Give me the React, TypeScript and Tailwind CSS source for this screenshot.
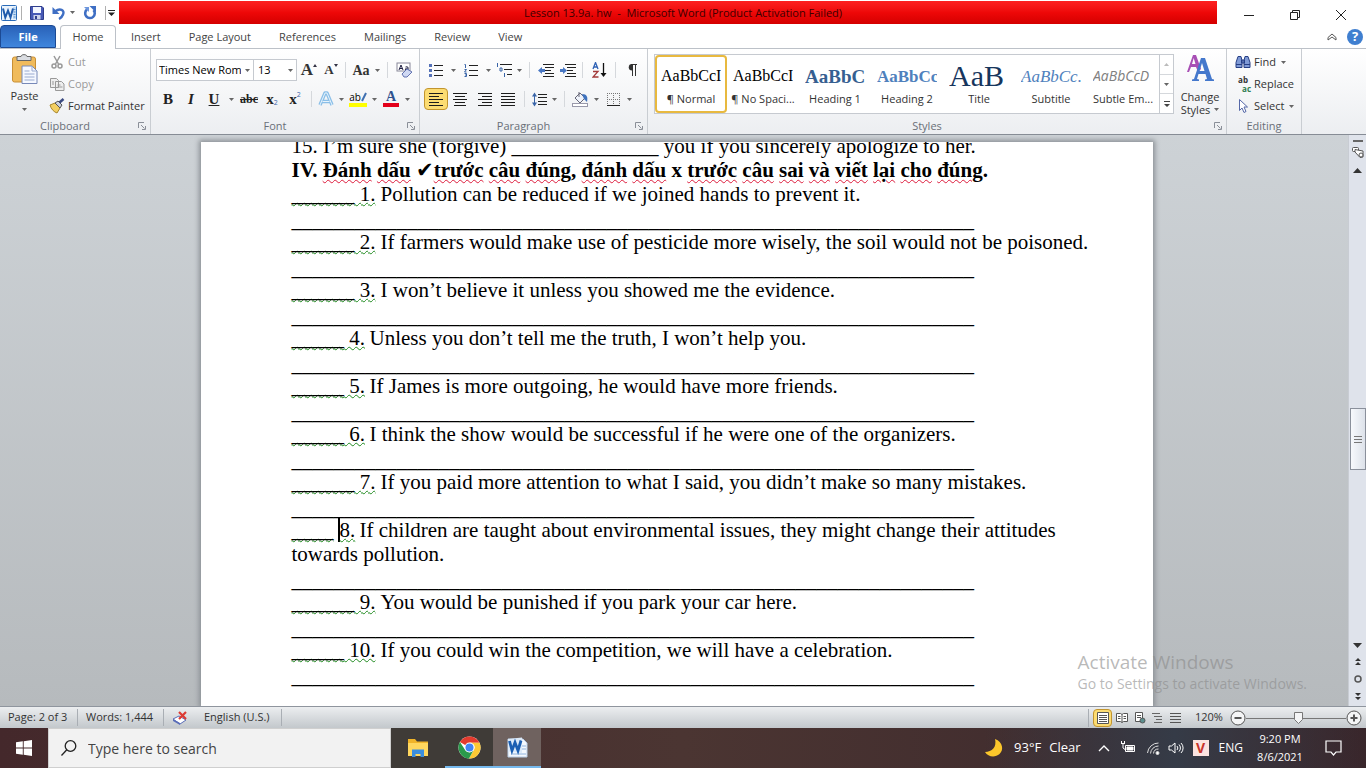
import type { ReactNode } from "react";

const ui = "font-['Open_Sans','Noto_Sans',sans-serif]";

const tabs = ["Insert", "Page Layout", "References", "Mailings", "Review", "View"];

const styleItems = [
  { name: "¶ Normal", sample: "AaBbCcI", cls: "text-[16px] text-black", active: true },
  { name: "¶ No Spaci...", sample: "AaBbCcI", cls: "text-[16px] text-black" },
  { name: "Heading 1", sample: "AaBbCc", cls: "text-[19px] font-bold text-[#365f91]" },
  { name: "Heading 2", sample: "AaBbCc", cls: "text-[17px] font-bold text-[#4f81bd]" },
  { name: "Title", sample: "AaB", cls: "text-[30px] text-[#17365d]" },
  { name: "Subtitle", sample: "AaBbCc.", cls: "text-[17px] italic text-[#4f81bd]" },
  { name: "Subtle Em...", sample: "AaBbCcD", cls: "text-[14px] italic text-[#808080] font-['Open_Sans',sans-serif]" },
];

const questions = [
  { blank: "______", n: "1.", lead: "w-[89px]", text: "Pollution can be reduced if we joined hands to prevent it." },
  { blank: "______", n: "2.", lead: "w-[89px]", text: "If farmers would make use of pesticide more wisely, the soil would not be poisoned." },
  { blank: "______", n: "3.", lead: "w-[89px]", text: "I won’t believe it unless you showed me the evidence." },
  { blank: "_____", n: "4.", lead: "w-[78px]", text: "Unless you don’t tell me the truth, I won’t help you." },
  { blank: "_____", n: "5.", lead: "w-[78px]", text: "If James is more outgoing, he would have more friends." },
  { blank: "_____", n: "6.", lead: "w-[78px]", text: "I think the show would be successful if he were one of the organizers." },
  { blank: "______", n: "7.", lead: "w-[89px]", text: "If you paid more attention to what I said, you didn’t make so many mistakes." },
  { blank: "____", n: "8.", lead: "w-[68px]", text: "If children are taught about environmental issues, they might change their attitudes", more: "towards pollution.", caret: true },
  { blank: "______", n: "9.", lead: "w-[89px]", text: "You would be punished if you park your car here." },
  { blank: "_____", n: "10.", lead: "w-[89px]", text: "If you could win the competition, we will have a celebration." },
];

const answerLine = "_".repeat(65);

function Arrow({ className = "" }: { className?: string }) {
  return (
    <svg viewBox="0 0 5 3" className={`h-[3px] w-[5px] shrink-0 ${className}`}>
      <path d="M0 0h5L2.5 3z" fill="#666" />
    </svg>
  );
}

function Tool({ w = "w-6", label, drop, active, children }: { w?: string; label: string; drop?: boolean; active?: boolean; children: ReactNode }) {
  return (
    <button
      aria-label={label}
      className={`flex h-[22px] shrink-0 items-center ${active ? "rounded-sm border border-[#c2952f] bg-[#fcdc72]" : ""}`}
    >
      <span className={`flex items-center justify-center ${active ? "w-[22px]" : w}`}>{children}</span>
      {drop && (
        <span className="flex w-[11px] justify-center">
          <Arrow />
        </span>
      )}
    </button>
  );
}

function Sep() {
  return (
    <span className="flex w-[9px] shrink-0 justify-center">
      <span className="h-4 w-px bg-[#d5d8dc]" />
    </span>
  );
}

function Group({ label, className, launcher, children }: { label: string; className: string; launcher?: boolean; children: ReactNode }) {
  return (
    <section className={`flex shrink-0 flex-col border-r border-[#c9cdd2] ${className}`}>
      <div className="h-[69px]">{children}</div>
      <div className="flex h-4 items-center">
        <span className="flex-1 text-center text-[#6a6f78]">{label}</span>
        {launcher && (
          <button aria-label={`${label} options`} className="mr-1 ml-2 w-2">
            <svg viewBox="0 0 8 8" className="size-2" fill="none" stroke="#8a8f98">
              <path d="M.5 6V.5H6M3 3l3.5 3.5M7.5 4v3.5H4" />
            </svg>
          </button>
        )}
      </div>
    </section>
  );
}

function Lines({ d }: { d: string }) {
  return (
    <svg viewBox="0 0 15 13" className="h-[13px] w-[15px]" stroke="#1c1c1c" shapeRendering="crispEdges">
      <path d={d} />
    </svg>
  );
}

function WordLogo({ className }: { className: string }) {
  return (
    <svg viewBox="0 0 16 16" className={className}>
      <rect x=".5" y=".5" width="15" height="15" rx="1" fill="#eaf3fc" stroke="#2a6bb8" />
      <rect x="12" y="2" width="3" height="12" fill="#c4dcf4" />
      <path d="M12.5 4.5h2M12.5 7h2M12.5 9.5h2M12.5 12h2" stroke="#5d93cf" />
      <path d="M2 3.5 4.3 12.5 7 5.500 9.5 12.500 12 3.500" fill="none" stroke="#1f5aab" strokeWidth="2" />
    </svg>
  );
}

function TitleBar() {
  return (
    <header className="flex h-[25px] shrink-0 bg-white">
      <div className="flex w-[119px] shrink-0 items-center pl-px">
        <WordLogo className="size-4" />
        <span className="ml-1 h-3.5 w-px bg-[#b0b0b0]" />
        <button aria-label="Save" className="ml-2">
          <svg viewBox="0 0 14 14" className="size-3.5">
            <path d="M.5.5h11.500l1.500 1.500v11.500H.5z" fill="#4759b5" stroke="#2f3d8c" />
            <path d="M3 1h8v6H3z" fill="#f3f6ff" />
            <path d="M3.500 9h7v4.500h-7z" fill="#cdd3ea" />
            <path d="M5 10h2v3H5z" fill="#2f3d8c" />
          </svg>
        </button>
        <button aria-label="Undo" className="ml-2 flex items-center">
          <svg viewBox="0 0 14 14" className="size-3.5" fill="none">
            <path d="M3 5.500C8 1.500 13 4 11 8.500 10.300 10.500 9 12 7 13" stroke="#3f6fc4" strokeWidth="2.400" />
            <path d="M.5 1v7h7z" fill="#3f6fc4" />
          </svg>
          <Arrow className="ml-1" />
        </button>
        <button aria-label="Repeat" className="ml-2">
          <svg viewBox="0 0 14 14" className="size-3.5" fill="none">
            <path d="M4 3.500a4.800 4.800 0 1 0 6.500.5" stroke="#3f6fc4" strokeWidth="2.600" />
            <path d="M6.500 0h6.500v6.500z" fill="#3f6fc4" />
            <path d="M1 1h5v5z" fill="#6e97dd" />
          </svg>
        </button>
        <span className="ml-2 h-3.5 w-px bg-[#b0b0b0]" />
        <button aria-label="Customize toolbar" className="ml-0.5">
          <svg viewBox="0 0 7 6" className="h-1.5 w-[7px]">
            <path d="M0 0h7v1H0zM0 2.500h7L3.500 6z" fill="#222" />
          </svg>
        </button>
      </div>
      <div className="mt-px flex h-[23px] flex-1 items-center justify-center bg-linear-to-b from-[#fd2020] via-[#ee0808] to-[#d40000] pt-0.5 pl-[30px] text-[11px] whitespace-pre text-[#3d0000]">
        Lesson 13.9a. hw  -  Microsoft Word (Product Activation Failed)
      </div>
      <div className="flex w-[149px] shrink-0 items-center pt-1 pl-[26px]">
        <button aria-label="Minimize" className="w-[46px]">
          <svg viewBox="0 0 12 12" className="size-3" stroke="#222"><path d="M1 6.500h10" /></svg>
        </button>
        <button aria-label="Restore" className="w-[46px]">
          <svg viewBox="0 0 12 12" className="size-3" fill="none" stroke="#222"><path d="M1.500 3.500h7v7h-7zM3.500 3.500v-2h7v7h-2" /></svg>
        </button>
        <button aria-label="Close">
          <svg viewBox="0 0 12 12" className="size-3" stroke="#222"><path d="M1 1l10 10M11 1 1 11" /></svg>
        </button>
      </div>
    </header>
  );
}

function TabBar() {
  return (
    <nav className="flex h-6 shrink-0 items-end border-b border-[#bcc1c8] bg-white text-[#444]">
      <button className="h-[23px] w-14 rounded-t-sm border border-[#1c4a94] bg-linear-to-b from-[#2a62b8] to-[#3f86dd] pt-px font-bold text-white">File</button>
      <button className="-mb-px ml-1 h-6 w-14 rounded-t-sm border border-b-0 border-[#bcc1c8] bg-white">Home</button>
      <div className="flex h-[23px] items-center gap-7 pt-0.5 pl-[15px]">
        {tabs.map((t) => (
          <button key={t}>{t}</button>
        ))}
      </div>
      <div className="ml-auto flex h-[23px] items-center gap-2.5 pr-[3px]">
        <button aria-label="Minimize the ribbon">
          <svg viewBox="0 0 10 8" className="h-2 w-2.5" fill="none" stroke="#555"><path d="M1 4.500 5 1l4 3.500v2.500L5 4 1 7z" /></svg>
        </button>
        <button aria-label="Help" className="flex size-4 items-center justify-center rounded-full bg-[#3f7fd0] text-[13px] font-bold text-white">?</button>
      </div>
    </nav>
  );
}

function Clipboard() {
  return (
    <Group label="Clipboard" className="w-[151px]" launcher>
      <div className="flex">
        <button className="flex w-[49px] flex-col items-center pt-[5px]">
          <svg viewBox="0 0 26 30" className="h-[30px] w-[26px]">
            <rect x=".5" y="3" width="23" height="25" rx="2" fill="#f0bb5c" stroke="#c88f35" />
            <path d="M5 6.500V2.500h4C9 0 15 0 15 2.500h4v4z" fill="#dadde2" stroke="#666" />
            <path d="M10 12h10l5 5v12.500H10z" fill="#f5f8ff" stroke="#7789b8" />
            <path d="M20 12v5h5M12.500 17h5M12.500 20h10M12.500 23h10M12.500 26h10" fill="none" stroke="#9aabd0" />
          </svg>
          <span className="mt-1 leading-4">Paste</span>
          <Arrow className="mt-1" />
        </button>
        <div className="flex flex-col items-start pt-0.5 text-[#9a9a9a]">
          <button className="flex h-[22px] items-center gap-[3px]">
            <svg viewBox="0 0 16 16" className="size-4" fill="none" stroke="#999" strokeWidth="1.500">
              <path d="M5 2l4.500 8M11 2 6.500 10" />
              <circle cx="5" cy="12" r="2" />
              <circle cx="11" cy="12" r="2" />
            </svg>
            Cut
          </button>
          <button className="flex h-[22px] items-center gap-[3px]">
            <svg viewBox="0 0 16 16" className="size-4" fill="#eee" stroke="#999">
              <path d="M1.500 2.500h6l2 2v7h-8zM6.500 5.500h6l2.500 2.500v6.500H6.500z" />
              <path d="M8.500 9h3M8.500 11h5M3 6h2M3 8h2" />
            </svg>
            Copy
          </button>
          <button className="flex h-[22px] items-center gap-[3px] text-[#333]">
            <svg viewBox="0 0 16 16" className="size-4">
              <path d="M1 7 6 5l5 5-3 5C5 14 2 11 1 7z" fill="#f3cf62" stroke="#a8862d" />
              <path d="m6 5 3-2 4 4-2 3z" fill="#c9cfdd" stroke="#555" />
              <path d="m10.500 4.500 4-3.500" stroke="#3a4a80" strokeWidth="2.500" />
            </svg>
            Format Painter
          </button>
        </div>
      </div>
    </Group>
  );
}

function FontGroup() {
  return (
    <Group label="Font" className="w-[269px]" launcher>
      <div className="flex flex-col gap-[7px] pt-2.5 pl-[5px]">
        <div className="flex items-center">
          <div className="relative">
            <select aria-label="Font" className="block h-[22px] w-[98px] appearance-none overflow-hidden border border-[#c6cad0] bg-white pr-3 pl-0.5 text-[11px] text-black">
              <option>Times New Rom</option>
            </select>
            <Arrow className="pointer-events-none absolute top-2.5 right-1" />
          </div>
          <div className="relative">
            <select aria-label="Font size" className="block h-[22px] w-[43px] appearance-none border border-l-0 border-[#c6cad0] bg-white pl-1 text-[11px] text-black">
              <option>13</option>
            </select>
            <Arrow className="pointer-events-none absolute top-2.5 right-1" />
          </div>
          <Tool label="Grow font">
            <span className="font-['Liberation_Serif',serif] text-[17px] font-bold text-[#333]">A</span>
            <svg viewBox="0 0 4 3" className="mb-2.5 h-[3px] w-1"><path d="M0 3h4L2 0z" fill="#334" /></svg>
          </Tool>
          <Tool label="Shrink font" w="w-5">
            <span className="font-['Liberation_Serif',serif] text-[13px] font-bold">A</span>
            <svg viewBox="0 0 4 3" className="mb-2.5 h-[3px] w-1"><path d="M0 0h4L2 3z" fill="#334" /></svg>
          </Tool>
          <Sep />
          <Tool label="Change case" w="w-[22px]" drop>
            <span className="font-['Liberation_Serif',serif] text-[14px] font-bold">Aa</span>
          </Tool>
          <Sep />
          <Tool label="Clear formatting">
            <svg viewBox="0 0 17 16" className="h-4 w-[17px]" fill="none">
              <rect x="1" y="1" width="13" height="8" fill="#fff" stroke="#889" />
              <path d="M3 8l2-5 2 5M3.500 6.500h3M9.500 5c2-1 3 0 2.500 3M12 6c-2 0-3 .500-2.500 2" stroke="#224" />
              <path d="m6 12 5-5 5 3-5 5H8z" fill="#cfd8f3" stroke="#6272b0" />
            </svg>
          </Tool>
        </div>
        <div className="flex items-center font-['Liberation_Serif',serif] text-[15px] text-[#222]">
          <Tool label="Bold"><b>B</b></Tool>
          <Tool label="Italic" w="w-[22px]"><b><i>I</i></b></Tool>
          <Tool label="Underline" drop><b className="underline">U</b></Tool>
          <Tool label="Strikethrough"><b className="text-[12px] line-through">abc</b></Tool>
          <Tool label="Subscript" w="w-[22px]">
            <b>x</b><span className="mt-2 font-['Open_Sans',sans-serif] text-[7px] text-[#3864a8]">2</span>
          </Tool>
          <Tool label="Superscript">
            <b>x</b><span className="mb-2 font-['Open_Sans',sans-serif] text-[7px] text-[#3864a8]">2</span>
          </Tool>
          <Sep />
          <Tool label="Text effects" w="w-5" drop>
            <svg viewBox="0 0 16 16" className="size-4" fill="none" strokeLinejoin="round">
              <path d="M2 14 7 2h2l5 12M4.500 10.500h7" stroke="#8bbfe8" strokeWidth="3.400" />
              <path d="M2 14 7 2h2l5 12M4.500 10.500h7" stroke="#e6f3fc" strokeWidth="1" />
            </svg>
          </Tool>
          <Tool label="Highlight" w="w-[22px]" drop>
            <span className="flex flex-col">
              <span className="flex h-3 items-center font-['Open_Sans',sans-serif] text-[10px] text-black">
                ab
                <svg viewBox="0 0 6 10" className="h-2.5 w-1.5"><path d="M1 9 5 1" stroke="#3f6fb0" strokeWidth="2" /></svg>
              </span>
              <span className="h-1 bg-[#ffff00]" />
            </span>
          </Tool>
          <Tool label="Font color" w="w-[22px]" drop>
            <span className="flex flex-col items-stretch text-center">
              <b className="h-3 text-[14px] leading-3 text-[#2f528f]">A</b>
              <span className="h-1 w-4 bg-[#e3001b]" />
            </span>
          </Tool>
        </div>
      </div>
    </Group>
  );
}

function Paragraph() {
  return (
    <Group label="Paragraph" className="w-[228px]" launcher>
      <div className="flex flex-col gap-[7px] pt-2.5 pl-1">
        <div className="flex items-center">
          <Tool label="Bullets" drop>
            <svg viewBox="0 0 14 13" className="h-[13px] w-3.5">
              <path d="M0 0h3v3H0zM0 5h3v3H0zM0 10h3v3H0z" fill="#5572b8" />
              <path d="M5 1.500h9M5 6.500h9M5 11.500h9" stroke="#222" />
            </svg>
          </Tool>
          <Tool label="Numbering" drop>
            <svg viewBox="0 0 14 13" className="h-[13px] w-3.5" fill="none">
              <path d="M.5.5h1V4M.5 5.500h2l-2 2.500h2M.5 9.500h2v3h-2M1 11h1" stroke="#3864a8" />
              <path d="M5 1.500h9M5 6.500h9M5 11.500h9" stroke="#222" />
            </svg>
          </Tool>
          <Tool label="Multilevel list" w="w-5" drop>
            <svg viewBox="0 0 16 14" className="h-3.5 w-4" fill="none">
              <path d="M1.500 0v4M4 5h2v3H4zM8.500 10v4" stroke="#3864a8" />
              <path d="M4 1.500h12M8 6.500h8M11 11.500h5" stroke="#222" />
            </svg>
          </Tool>
          <Sep />
          <Tool label="Decrease indent">
            <svg viewBox="0 0 16 13" className="h-[13px] w-4">
              <path d="M5 .5h11M7 3.500h9M7 6.500h6M7 9.500h9M5 12.500h11" stroke="#222" />
              <path d="M0 6.500 4 3v2h3v3H4v2z" fill="#4a78c4" />
            </svg>
          </Tool>
          <Tool label="Increase indent" w="w-5">
            <svg viewBox="0 0 16 13" className="h-[13px] w-4">
              <path d="M5 .5h11M7 3.500h9M7 6.500h6M7 9.500h9M5 12.500h11" stroke="#222" />
              <path d="M7 6.500 3 3v2H0v3h3v2z" fill="#4a78c4" />
            </svg>
          </Tool>
          <Sep />
          <Tool label="Sort">
            <svg viewBox="0 0 15 16" className="h-4 w-[15px]" fill="none">
              <path d="M1 7 3.500.5 6 7M2 5h3" stroke="#2f62b5" strokeWidth="1.300" />
              <path d="M1 9.500h5L1 15h5.500" stroke="#a33a3a" strokeWidth="1.300" />
              <path d="M11.500 1v12" stroke="#111" strokeWidth="1.300" />
              <path d="M8.500 11h6l-3 4z" fill="#111" />
            </svg>
          </Tool>
          <Sep />
          <Tool label="Show marks">
            <svg viewBox="0 0 10 12" className="h-3 w-2.5">
              <path d="M5 0a3 3 0 0 0 0 6.500z" fill="#333" />
              <path d="M5.500 0v12M8.500 0v12M4 .5h6" stroke="#333" />
            </svg>
          </Tool>
        </div>
        <div className="flex items-center">
          <Tool label="Align left" active><Lines d="M0 .5h14M0 3.500h10M0 6.500h14M0 9.500h10M0 12.500h14" /></Tool>
          <Tool label="Center"><Lines d="M0 .5h14M2 3.500h10M0 6.500h14M2 9.500h10M1 12.500h12" /></Tool>
          <Tool label="Align right"><Lines d="M1 .5h14M5 3.500h10M1 6.500h14M5 9.500h10M1 12.500h14" /></Tool>
          <Tool label="Justify"><Lines d="M0 .5h14M0 3.500h14M0 6.500h14M0 9.500h14M0 12.500h14" /></Tool>
          <Sep />
          <Tool label="Line spacing" w="w-5" drop>
            <svg viewBox="0 0 15 15" className="size-[15px]">
              <path d="M6 2.500h9M6 5.500h9M6 9.500h9M6 12.500h9" stroke="#222" />
              <path d="M2.500 3v9" stroke="#3864a8" />
              <path d="M0 4.500 2.500.5 5 4.500zM0 10.500l2.500 4 2.500-4z" fill="#3864a8" />
            </svg>
          </Tool>
          <Sep />
          <Tool label="Shading" w="w-[22px]" drop>
            <svg viewBox="0 0 17 16" className="h-4 w-[17px]">
              <path d="m3 7 5-5 5 5-5 5z" fill="#eef2fa" stroke="#667" />
              <path d="M7 6V1" stroke="#667" />
              <path d="M10 3c5 0 6 3 5 8l-3-3z" fill="#3f72bd" />
              <rect x=".5" y="12.500" width="15" height="3" fill="#fff" stroke="#99a" />
            </svg>
          </Tool>
          <Tool label="Borders" w="w-[22px]" drop>
            <svg viewBox="0 0 13 13" className="size-[13px]" fill="none" stroke="#777">
              <path d="M.5 0v12M6.500 0v12M12.500 0v12M0 .5h13M0 6.500h13" strokeDasharray="1 1" />
              <path d="M0 12.500h13" stroke="#222" />
            </svg>
          </Tool>
        </div>
      </div>
    </Group>
  );
}

function Styles() {
  return (
    <Group label="Styles" className="w-[579px]" launcher>
      <div className="flex pt-[5px] pl-1.5">
        <div className="flex h-[60px] border border-[#c6cad0] bg-white">
          {styleItems.map((s) => (
            <button
              key={s.name}
              className={`flex w-[72px] flex-col items-center overflow-hidden ${s.active ? "rounded-sm border-2 border-[#e8b93f]" : "border-2 border-transparent"}`}
            >
              <span className={`flex h-[34px] w-[60px] items-center overflow-hidden pt-1 font-['Liberation_Serif',serif] leading-none whitespace-nowrap ${s.cls}`}>{s.sample}</span>
              <span className="leading-4 whitespace-nowrap">{s.name}</span>
            </button>
          ))}
          <div className="flex w-[14px] flex-col border-l border-[#c6cad0]">
            <button aria-label="Scroll up" className="flex flex-1 items-center justify-center">
              <svg viewBox="0 0 5 3" className="h-[3px] w-[5px]"><path d="M0 3h5L2.500 0z" fill="#bbb" /></svg>
            </button>
            <button aria-label="Scroll down" className="flex flex-1 items-center justify-center border-y border-[#d5d8dc]"><Arrow /></button>
            <button aria-label="More styles" className="flex flex-1 items-center justify-center">
              <svg viewBox="0 0 6 6" className="size-1.5"><path d="M0 0h6v1H0zM0 3h6L3 6z" fill="#444" /></svg>
            </button>
          </div>
        </div>
        <button className="flex flex-1 flex-col items-center">
          <svg viewBox="0 0 30 28" className="h-7 w-[30px]">
            <path d="M2 18 8 1h3l5 14-3 3-2-5H6l-2 5zM7 10h3.500L8.700 4z" fill="#a84fb5" fillRule="evenodd" />
            <path d="M7 27v-1.500l2-.5 7-21h4l7 21 2 .5V27h-9v-1.500l2-.5-1.500-5h-7L12 25l2 .5V27zM14.500 17h5L17 9z" fill="#4478cc" fillRule="evenodd" />
          </svg>
          <span className="mt-2 leading-[13px]">Change</span>
          <span className="flex items-center gap-1 leading-[13px]">Styles <Arrow /></span>
        </button>
      </div>
    </Group>
  );
}

function Editing() {
  return (
    <Group label="Editing" className="w-[75px]">
      <div className="flex flex-col items-start pt-0.5 pl-2">
        <button className="flex h-[22px] items-center gap-[3px]">
          <svg viewBox="0 0 16 14" className="h-3.5 w-4" fill="#7f9ad6" stroke="#263f85">
            <path d="M3 1.500h3l1 4v7H1v-5zM10 1.500h3l2 6v5H9v-7zM6.500 5h3v3h-3zM1 9.500h6M9 9.500h6" />
          </svg>
          Find <Arrow className="ml-0.5" />
        </button>
        <button className="flex h-[22px] items-center gap-[3px]">
          <span className="flex w-4 flex-col text-[8px] leading-[9px] font-bold">
            <span>ab</span>
            <span className="text-right text-[#2e7d4f]">ac</span>
          </span>
          Replace
        </button>
        <button className="flex h-[22px] items-center gap-[3px]">
          <svg viewBox="0 0 16 16" className="size-4">
            <path d="M4.500 1.500v11l2.500-2.500 2 4.500 2-1-2-4.500h3.500z" fill="#fff" stroke="#5568a8" />
          </svg>
          Select <Arrow className="ml-0.5" />
        </button>
      </div>
    </Group>
  );
}

// red wavy underline used by the spell checker
function Sp({ children }: { children: ReactNode }) {
  return <span className="underline decoration-[#dd1c3c] decoration-wavy decoration-1 underline-offset-2">{children}</span>;
}

function Page() {
  return (
    <article className="mx-auto w-full max-w-[952px] flex-1 overflow-hidden bg-white pl-[91px] font-['Liberation_Serif','Times_New_Roman',serif] text-[21px] leading-6 whitespace-nowrap text-black shadow-[0_0_5px_2px_#8b9095]">
      <p className="-mt-2">15. I’m sure she (forgive) ______________ you if you sincerely apologize to her.</p>
      <h2 className="font-bold">
        IV. <Sp>Đánh</Sp> <Sp>dấu</Sp> <span className="font-['DejaVu_Sans',sans-serif] leading-none font-normal">✔</span>
        <Sp>trước</Sp> <Sp>câu</Sp> <Sp>đúng</Sp>, <Sp>đánh</Sp> <Sp>dấu</Sp> x <Sp>trước</Sp> <Sp>câu</Sp> <Sp>sai</Sp> <Sp>và</Sp> <Sp>viết</Sp> <Sp>lại</Sp> <Sp>cho</Sp> <Sp>đúng</Sp>.
      </h2>
      {questions.map((q) => (
        <div key={q.n}>
          <p>
            <span className={`inline-block ${q.lead}`}>
              <span className="underline decoration-[#1f8a1f] decoration-wavy decoration-1 underline-offset-1">
                {q.blank}
                {q.caret ? <span className="ml-1 border-l-2 border-black">{q.n}</span> : ` ${q.n}`}
              </span>
            </span>
            {q.text}
          </p>
          {q.more && <p>{q.more}</p>}
          <p className="h-6 leading-7">{answerLine}</p>
        </div>
      ))}
    </article>
  );
}

function ScrollBar() {
  return (
    <aside className="flex w-[18px] shrink-0 flex-col items-center border-l border-[#c8ccd3] bg-[#dfe3eb]">
      <span className="mt-[5px] h-0.5 w-2.5 bg-[#666]" />
      <button aria-label="View ruler" className="mt-1">
        <svg viewBox="0 0 12 12" className="size-3" fill="#fff" stroke="#555">
          <rect x=".5" y="1.500" width="6" height="4" rx="1" />
          <path d="M3 3.500 11 5v6l-3 .500L3 6z" />
          <circle cx="9" cy="9" r="2" />
        </svg>
      </button>
      <button aria-label="Line up" className="mt-1.5 h-3">
        <svg viewBox="0 0 9 5" className="h-[5px] w-[9px]"><path d="M0 5h9L4.500 0z" fill="#333" /></svg>
      </button>
      <div className="min-h-0 w-full flex-[233]" />
      <div className="flex h-[62px] w-4 shrink-0 flex-col items-center justify-center gap-0.5 border border-[#8a909b] bg-linear-to-r from-[#f7f9fc] to-[#dde2ea]">
        <span className="h-px w-2 bg-[#777]" />
        <span className="h-px w-2 bg-[#777]" />
        <span className="h-px w-2 bg-[#777]" />
      </div>
      <div className="min-h-0 w-full flex-[173]" />
      <div className="flex flex-col items-center gap-2.5 pb-1.5">
        <button aria-label="Line down">
          <svg viewBox="0 0 9 5" className="h-[5px] w-[9px]"><path d="M0 0h9L4.500 5z" fill="#333" /></svg>
        </button>
        <button aria-label="Previous page">
          <svg viewBox="0 0 6 7" className="h-[7px] w-1.5"><path d="M0 3h6L3 0zM0 7h6L3 4z" fill="#333" /></svg>
        </button>
        <button aria-label="Browse object">
          <svg viewBox="0 0 8 8" className="size-2" fill="none" stroke="#555" strokeWidth="1.500"><circle cx="4" cy="4" r="3" /></svg>
        </button>
        <button aria-label="Next page">
          <svg viewBox="0 0 6 7" className="h-[7px] w-1.5"><path d="M0 0h6L3 3zM0 4h6L3 7z" fill="#333" /></svg>
        </button>
      </div>
    </aside>
  );
}

function StatusBar() {
  return (
    <footer className="flex h-[22px] shrink-0 items-center border-t border-[#8f959e] bg-linear-to-b from-[#eceef0] to-[#c3c8cc] whitespace-nowrap text-[#333]">
      <button className="w-[78px] border-r border-[#a9aeb4] pl-2 text-left">Page: 2 of 3</button>
      <button className="w-[86px] border-r border-[#a9aeb4] pl-2 text-left">Words: 1,444</button>
      <button aria-label="Proofing" className="w-8 pl-2">
        <svg viewBox="0 0 16 14" className="h-3.5 w-4">
          <path d="m1 8 6-3 7 4-6 4z" fill="#fff" stroke="#5a6db8" />
          <path d="M1 8v2l7 4v-2" fill="#5a6db8" />
          <path d="m7 1 7 7M14 1 7 8" stroke="#dd3b33" strokeWidth="2.200" />
        </svg>
      </button>
      <button className="w-[86px] border-r border-[#a9aeb4] pl-2 text-left">English (U.S.)</button>
      <div className="ml-auto flex items-center border-l border-[#a9aeb4] pl-1">
        <button aria-label="Print layout" className="flex h-[18px] w-[19px] items-center justify-center rounded-sm border border-[#c2952f] bg-[#fcdc72]">
          <svg viewBox="0 0 12 12" className="size-3" fill="#fff" stroke="#555"><path d="M.5.5h11v11H.5zM2 3.500h8M2 5.500h8M2 7.500h8M2 9.500h8" /></svg>
        </button>
        <button aria-label="Full screen reading" className="ml-1">
          <svg viewBox="0 0 12 12" className="size-3" fill="#fff" stroke="#555"><path d="M.5 1.500h4l1.500 1 1.500-1h4v8h-4l-1.500 1-1.500-1h-4zM6 2.500v8M2 4.500h2.500M2 6.500h2.500M7.500 4.500H10M7.500 6.500H10" /></svg>
        </button>
        <button aria-label="Web layout" className="ml-1.5">
          <svg viewBox="0 0 12 12" className="size-3" fill="#fff" stroke="#555"><path d="M1.500.5h7v9h-7zM3 3.500h4M3 5.500h4" /><circle cx="8.500" cy="8.500" r="2.500" fill="#5b8f8f" /></svg>
        </button>
        <button aria-label="Outline" className="ml-1.5">
          <svg viewBox="0 0 12 10" className="h-2.5 w-3" stroke="#666"><path d="M0 .5h8M2 3.500h8M4 6.500h6M2 9.500h8" /></svg>
        </button>
        <button aria-label="Draft" className="ml-1.5">
          <svg viewBox="0 0 11 10" className="h-2.5 w-[11px]" stroke="#555"><path d="M0 .5h11M0 3.500h11M0 6.500h11M0 9.500h11" /></svg>
        </button>
        <span className="ml-3.5 w-8">120%</span>
        <button aria-label="Zoom out" className="ml-[3px]">
          <svg viewBox="0 0 16 16" className="size-4" fill="#f4f5f6" stroke="#555"><circle cx="8" cy="8" r="7" /><path d="M4.500 8h7" strokeWidth="2" /></svg>
        </button>
        <svg viewBox="0 0 100 14" className="h-3.5 w-[100px]" fill="#f4f5f6" stroke="#777">
          <path d="M0 7.500h100" />
          <path d="M48.500 1.500h8v7l-4 4-4-4z" />
        </svg>
        <button aria-label="Zoom in" className="mr-1">
          <svg viewBox="0 0 16 16" className="size-4" fill="#f4f5f6" stroke="#555"><circle cx="8" cy="8" r="7" /><path d="M4.500 8h7M8 4.500v7" strokeWidth="2" /></svg>
        </button>
      </div>
    </footer>
  );
}

function Taskbar() {
  return (
    <div className="flex h-10 shrink-0 items-stretch bg-linear-to-r from-[#44282b] via-[#4b3532] to-[#39262b] text-white">
      <button aria-label="Start" className="flex w-12 items-center justify-center">
        <svg viewBox="0 0 16 16" className="size-4" fill="#fff"><path d="M0 2.300 6.800 1.300v6.200H0zM7.700 1.200 16 0v7.500H7.700zM0 8.400h6.800v6.300L0 13.700zM7.700 8.400H16V16l-8.300-1.200z" /></svg>
      </button>
      <label className="flex w-[343px] items-center gap-[11px] border border-[#cfcfcf] bg-[#f2f2f2] pl-3">
        <svg viewBox="0 0 16 16" className="size-4" fill="none" stroke="#222" strokeWidth="1.300"><circle cx="9.500" cy="6" r="5.300" /><path d="M5.800 9.800.5 15.500" /></svg>
        <input aria-label="Search" placeholder="Type here to search" className="min-w-0 flex-1 bg-transparent text-[14px] outline-none placeholder:text-[#444]" />
      </label>
      <div className="flex bg-[#3f3b37]">
        <button aria-label="File Explorer" className="flex w-[54px] items-center justify-center">
          <svg viewBox="0 0 22 20" className="h-5 w-[22px]">
            <path d="M1 1h7l2 2.500h11V18H1z" fill="#f0b429" />
            <path d="M1 5h20v13H1z" fill="#ffd75e" />
            <path d="M5 19v-7.500h12V19h-3.500v-3h-5v3z" fill="#3b8ede" />
          </svg>
        </button>
        <button aria-label="Chrome" className="flex w-12 items-center justify-center border-b-2 border-[#76b9ed]">
          <svg viewBox="0 0 24 24" className="size-[23px]">
            <circle cx="12" cy="12" r="11.500" fill="#fff" />
            <path d="M12 12 2 6.300A11.500 11.500 0 0 1 22 6.300V7H12z" fill="#e33b2e" />
            <path d="M22 6.300A11.500 11.500 0 0 1 11.500 23.500L16.500 14.500A5 5 0 0 0 16 8.500L12 7h10z" fill="#fcc934" />
            <path d="M2 6.300A11.500 11.500 0 0 0 11.500 23.500L16 15l-4 2a5 5 0 0 1-4.500-2.500z" fill="#2a9a4b" />
            <circle cx="12" cy="12" r="5.200" fill="#fff" />
            <circle cx="12" cy="12" r="4.200" fill="#4285f4" />
          </svg>
        </button>
      </div>
      <button aria-label="Word" className="flex w-12 items-center justify-center border-b-2 border-[#76b9ed] bg-[#6f625f]">
        <svg viewBox="0 0 21 21" className="size-[21px]">
          <path d="M1 2h15l4 4v14H1z" fill="#f4f8fd" stroke="#b9cde6" />
          <path d="M15 9h4M15 12h4M4 17h15" stroke="#8fb2dc" />
          <path d="m1 2 14-1.500V16L1 14.500z" fill="#dbe9f8" />
          <path d="M2.500 4 5 13.500 8 5.500l3 8L14 3.500" fill="none" stroke="#1b5fb3" strokeWidth="2.800" />
        </svg>
      </button>
      <div className="ml-auto flex items-center bg-linear-to-r from-transparent via-[#353b47] to-transparent">
        <svg viewBox="0 0 20 20" className="size-5"><path d="M11 1c2 8-3 13-10 13 3 5 10 6 14.500 2S19 4 11 1z" fill="#fbc62b" /></svg>
        <span className="ml-2.5 text-[13px]">93°F</span>
        <span className="ml-2 text-[13px]">Clear</span>
        <button aria-label="Show hidden icons" className="ml-[17px]">
          <svg viewBox="0 0 12 8" className="h-2 w-3" fill="none" stroke="#fff" strokeWidth="1.400"><path d="m1 7 5-5 5 5" /></svg>
        </button>
        <svg viewBox="0 0 16 14" className="ml-2.5 h-3.5 w-4" fill="none" stroke="#fff"><path d="M1 2.500h4M1.500 0v2M4.500 0v2M3 3v4l2 1.500M5.500 4.500h9v6h-9z" /><path d="M7 6h6v3H7z" fill="#fff" /></svg>
        <svg viewBox="0 0 14 14" className="ml-2.5 size-3.5" fill="none" stroke="#ddd"><path d="M1.500 12A11 11 0 0 1 12.500 2M4.500 12.500a8 8 0 0 1 8-7.500M7.500 12.500a5 5 0 0 1 5-4.500" /><circle cx="11.500" cy="12" r="1.500" fill="#fff" /></svg>
        <svg viewBox="0 0 17 14" className="ml-2 h-3.5 w-[17px]" fill="none" stroke="#fff"><path d="M1 5h2.500L7 2v10L3.500 9H1zM9 5a3 3 0 0 1 0 4M11 3.500a5 5 0 0 1 0 7M13 2a7 7 0 0 1 0 10" /></svg>
        <span className="ml-2 flex size-4 items-center justify-center bg-[#fbe3e0] text-[14px] leading-none font-bold text-[#c8342b]">V</span>
        <span className="ml-2.5 text-[12px]">ENG</span>
        <div className="ml-2.5 w-[54px] text-center text-[11px] leading-[18px]">
          <div>9:20 PM</div>
          <div>8/6/2021</div>
        </div>
        <button aria-label="Notifications" className="mr-6 ml-[18px]">
          <svg viewBox="0 0 17 16" className="h-4 w-[17px]" fill="none" stroke="#fff" strokeWidth="1.200"><path d="M1 1h15v11h-5l-2.500 3L6 12H1z" /></svg>
        </button>
      </div>
    </div>
  );
}

export default function App() {
  return (
    <div className={`flex h-screen flex-col overflow-hidden text-[11px] text-[#333] ${ui}`}>
      <TitleBar />
      <TabBar />
      <div className="flex h-[86px] shrink-0 overflow-hidden border-b border-[#868c95] bg-linear-to-b from-white to-[#eceef1]">
        <Clipboard />
        <FontGroup />
        <Paragraph />
        <Styles />
        <Editing />
      </div>
      <main className="relative flex min-h-0 flex-1 bg-linear-to-b from-[#cdd2d6] to-[#b6babd]">
        <div className="flex min-w-0 flex-1 overflow-hidden pt-[7px] pl-[5px]">
          <Page />
        </div>
        <ScrollBar />
        <div className="pointer-events-none absolute right-[59px] bottom-3 text-[#8a8a8a]/60">
          <p className="text-[19px] leading-6">Activate Windows</p>
          <p className="text-[14px] leading-5">Go to Settings to activate Windows.</p>
        </div>
      </main>
      <StatusBar />
      <Taskbar />
    </div>
  );
}
